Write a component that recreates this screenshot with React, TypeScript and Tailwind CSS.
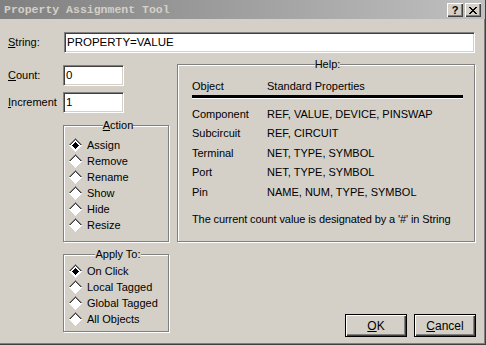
const ui = { fontFamily: '"Liberation Sans", Arial, sans-serif' };

const Diamond = ({ checked }: { checked?: boolean }) => (
  <svg width="15" height="15" viewBox="0 0 15 15" shapeRendering="crispEdges" className="shrink-0">
    <polygon points="7.5,0.5 14.5,7.5 7.5,14.5 0.5,7.5" fill="#fff" />
    <polyline points="0.5,7.5 7.5,0.5 14.5,7.5" fill="none" stroke="#808080" />
    <polyline points="1.5,7.5 7.5,1.5 13.5,7.5" fill="none" stroke="#404040" />
    <polyline points="0.5,7.5 7.5,14.5 14.5,7.5" fill="none" stroke="#d4d0c8" />
    {checked && <polygon points="7.5,4 11,7.5 7.5,11 4,7.5" fill="#000" />}
  </svg>
);

const Radio = ({ label, checked }: { label: string; checked?: boolean }) => (
  <div className="flex items-center h-[16px] gap-[4px]">
    <Diamond checked={checked} />
    <span className="text-[11px] leading-none text-black">{label}</span>
  </div>
);

const Sunken = ({ value, w }: { value: string; w: string }) => (
  <div
    className={`${w} h-[21px] bg-white border border-t-[#808080] border-l-[#808080] border-b-white border-r-white shadow-[inset_1px_1px_0_#404040,inset_-1px_-1px_0_#d4d0c8] flex items-center pl-[2px] text-[11.5px] text-black`}
  >
    {value}
  </div>
);

const groupBox =
  "border border-[#808080] shadow-[inset_1px_1px_0_#fff,1px_1px_0_#fff] m-0";

const Btn = ({ children }: { children: React.ReactNode }) => (
  <button className="w-[62px] h-[23px] border border-black bg-[#d4d0c8] shadow-[inset_1px_1px_0_#fff,inset_-1px_-1px_0_#404040,inset_-2px_-2px_0_#808080] text-[12px] text-black">
    {children}
  </button>
);

const rows = [
  ["Component", "REF, VALUE, DEVICE, PINSWAP"],
  ["Subcircuit", "REF, CIRCUIT"],
  ["Terminal", "NET, TYPE, SYMBOL"],
  ["Port", "NET, TYPE, SYMBOL"],
  ["Pin", "NAME, NUM, TYPE, SYMBOL"],
];

export default function App() {
  return (
    <div
      className="w-[486px] h-[345px] bg-[#d4d0c8] flex flex-col border-r border-b border-[#404040] shadow-[inset_-1px_-1px_0_#808080] overflow-hidden"
      style={ui}
    >
      {/* title bar */}
      <div className="h-[19px] shrink-0 bg-linear-to-r from-[#808080] to-[#c0c0c0] flex items-center pl-[4px] pr-[4px]">
        <span
          className="text-[11.5px] font-bold text-[#d4d0c8] flex-1"
          style={{ fontFamily: '"Liberation Mono", monospace' }}
        >
          Property Assignment Tool
        </span>
        <div className="flex gap-[2px] mt-[1px]">
          <div className="w-[16px] h-[14px] bg-[#d4d0c8] shadow-[inset_1px_1px_0_#fff,inset_-1px_-1px_0_#404040,inset_-2px_-2px_0_#808080] flex items-center justify-center text-[11px] font-bold leading-none text-black">
            ?
          </div>
          <div className="w-[16px] h-[14px] bg-[#d4d0c8] shadow-[inset_1px_1px_0_#fff,inset_-1px_-1px_0_#404040,inset_-2px_-2px_0_#808080] flex items-center justify-center">
            <svg width="8" height="7" viewBox="0 0 8 7" shapeRendering="crispEdges">
              <path d="M0 0h2v1H0zM6 0h2v1H6zM1 1h2v1H1zM5 1h2v1H5zM2 2h4v1H2zM3 3h2v1H3zM2 4h4v1H2zM1 5h2v1H1zM5 5h2v1H5zM0 6h2v1H0zM6 6h2v1H6z" fill="#000" />
            </svg>
          </div>
        </div>
      </div>

      {/* body */}
      <div className="flex flex-col pl-[8px] pt-[13px]">
        <div className="flex items-center">
          <label className="w-[56px] text-[11px] text-black">
            <u>S</u>tring:
          </label>
          <Sunken value="PROPERTY=VALUE" w="w-[411px]" />
        </div>

        <div className="flex mt-[5px] gap-[8px]">
          {/* left column */}
          <div className="flex flex-col w-[161px] pt-[7px]">
            <div className="flex items-center">
              <label className="w-[55px] text-[11px] text-black">
                <u>C</u>ount:
              </label>
              <Sunken value="0" w="w-[61px]" />
            </div>
            <div className="flex items-center mt-[6px]">
              <label className="w-[55px] text-[11px] text-black whitespace-nowrap overflow-hidden">
                <u>I</u>ncrement
              </label>
              <Sunken value="1" w="w-[61px]" />
            </div>

            <fieldset className={`${groupBox} ml-[55px] w-[106px] mt-[6px] pl-[4px] pt-[5px] pb-[8px]`}>
              <legend className="mx-auto px-0 text-[11px] leading-[13px] bg-[#d4d0c8] text-black">
                <u>A</u>ction
              </legend>
              <Radio label="Assign" checked />
              <Radio label="Remove" />
              <Radio label="Rename" />
              <Radio label="Show" />
              <Radio label="Hide" />
              <Radio label="Resize" />
            </fieldset>

            <fieldset className={`${groupBox} ml-[55px] w-[106px] mt-[6px] pl-[4px] pt-[2px] pb-[4px]`}>
              <legend className="mx-auto px-0 text-[11px] leading-[13px] bg-[#d4d0c8] text-black">
                Apply To:
              </legend>
              <Radio label="On Click" checked />
              <Radio label="Local Tagged" />
              <Radio label="Global Tagged" />
              <Radio label="All Objects" />
            </fieldset>
          </div>

          {/* right column */}
          <div className="flex flex-col w-[299px]">
            <fieldset className={`${groupBox} w-[298px] pl-[14px] pr-[11px] pt-[8px] pb-[14px]`}>
              <legend className="mx-auto px-0 text-[11px] leading-[13px] bg-[#d4d0c8] text-black">
                Help:
              </legend>
              <div className="flex text-[11px] text-black h-[14px] items-center">
                <span className="w-[75px]">Object</span>
                <span>Standard Properties</span>
              </div>
              <div className="mt-[2px] mb-[6px] h-[3px] bg-black shadow-[0_1px_0_#fff]" />
              {rows.map(([o, p]) => (
                <div key={o} className="flex items-center h-[19.5px] text-[11px] text-black">
                  <span className="w-[75px]">{o}</span>
                  <span>{p}</span>
                </div>
              ))}
              <div className="mt-[9px] text-[11px] text-black tracking-[-0.1px]">
                The current count value is designated by a '#' in String
              </div>
            </fieldset>

            <div className="flex justify-end gap-[7px] mt-[72px]">
              <Btn>
                <u>O</u>K
              </Btn>
              <Btn>
                <u>C</u>ancel
              </Btn>
            </div>
          </div>
        </div>
      </div>
    </div>
  );
}
